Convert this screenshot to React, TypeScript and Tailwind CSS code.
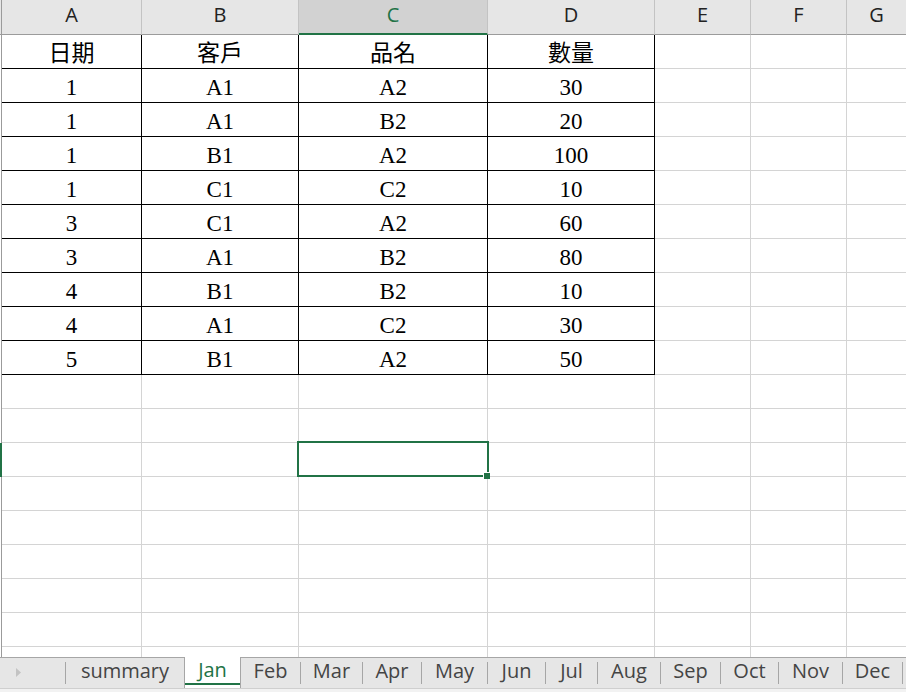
import React from 'react';

const cols = [
  { l: 'A', w: 'w-[140px]' },
  { l: 'B', w: 'w-[157px]' },
  { l: 'C', w: 'w-[189px]' },
  { l: 'D', w: 'w-[167px]' },
  { l: 'E', w: 'w-[96px]' },
  { l: 'F', w: 'w-[96px]' },
  { l: 'G', w: 'flex-1' },
];

const data: string[][] = [
  ['日期', '客戶', '品名', '數量'],
  ['1', 'A1', 'A2', '30'],
  ['1', 'A1', 'B2', '20'],
  ['1', 'B1', 'A2', '100'],
  ['1', 'C1', 'C2', '10'],
  ['3', 'C1', 'A2', '60'],
  ['3', 'A1', 'B2', '80'],
  ['4', 'B1', 'B2', '10'],
  ['4', 'A1', 'C2', '30'],
  ['5', 'B1', 'A2', '50'],
];

const ROWS = 19;
const SEL_ROW = 12;
const SEL_COL = 2;

const tabs = [
  { n: 'summary', w: 'w-[118px]' },
  { n: 'Jan', w: 'w-[57px]', active: true },
  { n: 'Feb', w: 'w-[59px]' },
  { n: 'Mar', w: 'w-[61px]' },
  { n: 'Apr', w: 'w-[58px]' },
  { n: 'May', w: 'w-[65px]' },
  { n: 'Jun', w: 'w-[57px]' },
  { n: 'Jul', w: 'w-[51px]' },
  { n: 'Aug', w: 'w-[62px]' },
  { n: 'Sep', w: 'w-[59px]' },
  { n: 'Oct', w: 'w-[57px]' },
  { n: 'Nov', w: 'w-[63px]' },
  { n: 'Dec', w: 'w-[59px]' },
];

const uiFont = { fontFamily: '"Open Sans", "Noto Sans", sans-serif' };
const cellFont = { fontFamily: '"Liberation Serif", "Noto Sans CJK TC", serif' };

function HeaderRow() {
  return (
    <div className="flex h-[35px] shrink-0 bg-[#e6e6e6]">
      <div className="w-[2px] shrink-0 border-r border-[#9b9b9b] border-b" />
      {cols.map((c, i) => {
        const sel = i === SEL_COL;
        return (
          <div
            key={c.l}
            className={
              'flex shrink-0 items-center justify-center pb-[4px] text-[20px] ' +
              c.w +
              (i < cols.length - 1 ? ' border-r border-r-[#c3c3c3]' : '') +
              (sel
                ? ' bg-[#d2d2d2] text-[#217346] border-b-2 border-b-[#217346]'
                : ' text-[#222222] border-b border-b-[#9b9b9b]')
            }
            style={uiFont}
          >
            {c.l}
          </div>
        );
      })}
    </div>
  );
}

function BodyRow({ r }: { r: number }) {
  const isData = r < data.length;
  return (
    <div className="flex h-[34px] shrink-0">
      <div
        className={
          'w-[2px] shrink-0 ' +
          (r === SEL_ROW ? 'bg-[#217346]' : 'border-r border-[#9b9b9b] bg-white')
        }
      />
      {cols.map((c, i) => {
        const inData = isData && i < 4;
        const txt = inData ? data[r][i] : '';
        const sel = r === SEL_ROW && i === SEL_COL;
        return (
          <div
            key={c.l}
            className={
              'flex shrink-0 items-center justify-center bg-white pt-[3px] text-[23px] leading-none text-black ' +
              c.w +
              (sel ? ' relative z-10' : '') +
              (inData ? ' border-r border-r-black' : i < cols.length - 1 ? ' border-r border-r-[#d4d4d4]' : '') +
              (inData ? ' border-b border-b-black' : ' border-b border-b-[#d4d4d4]')
            }
            style={cellFont}
          >
            {txt}
            {sel && (
              <>
                <div className="absolute -left-[2px] -top-[2px] h-[36px] w-[192px] border-2 border-[#217346]" />
                <div className="absolute -right-[3px] -bottom-[3px] h-[7px] w-[7px] border-l border-t border-white bg-[#217346]" />
              </>
            )}
          </div>
        );
      })}
    </div>
  );
}

function Sep() {
  return <div className="h-[22px] w-px shrink-0 self-center bg-[#a6a6a6]" />;
}

function TabBar() {
  return (
    <div className="flex h-[35px] shrink-0 flex-col">
      <div className="h-px shrink-0 bg-[#a6a6a6]" />
      <div className="flex h-[30px] shrink-0 bg-[#e6e6e6]" style={uiFont}>
        <div className="flex w-[65px] shrink-0 items-center pl-[16px] pb-[2px]">
          <svg width="6" height="9" viewBox="0 0 6 9">
            <path d="M0 0 L5 4.5 L0 9 Z" fill="#c3c3c3" />
          </svg>
        </div>
        <Sep />
        {tabs.map((t, i) => {
          const nextActive = tabs[i + 1]?.active;
          return (
            <React.Fragment key={t.n}>
              {t.active ? (
                <div
                  className={
                    'relative -mt-px flex h-[31px] shrink-0 items-center justify-center border-x border-[#a6a6a6] bg-white pb-[5px] text-[20px] text-[#217346] ' +
                    t.w
                  }
                >
                  {t.n}
                  <div className="absolute bottom-[3px] left-0 right-0 h-[2px] bg-[#217346]" />
                </div>
              ) : (
                <div
                  className={
                    'flex shrink-0 items-center justify-center pb-[5px] text-[20px] text-[#444444] ' + t.w
                  }
                >
                  {t.n}
                </div>
              )}
              {!t.active && !nextActive && <Sep />}
            </React.Fragment>
          );
        })}
      </div>
      <div className="h-px shrink-0 bg-[#cfcfcf]" />
      <div className="h-[3px] shrink-0 bg-[#f2f2f2]" />
    </div>
  );
}

export default function App() {
  return (
    <div className="flex h-[692px] w-[906px] flex-col overflow-hidden bg-white">
      <div className="flex h-[657px] shrink-0 flex-col overflow-hidden">
        <HeaderRow />
        {Array.from({ length: ROWS }, (_, r) => (
          <BodyRow key={r} r={r} />
        ))}
      </div>
      <TabBar />
    </div>
  );
}
